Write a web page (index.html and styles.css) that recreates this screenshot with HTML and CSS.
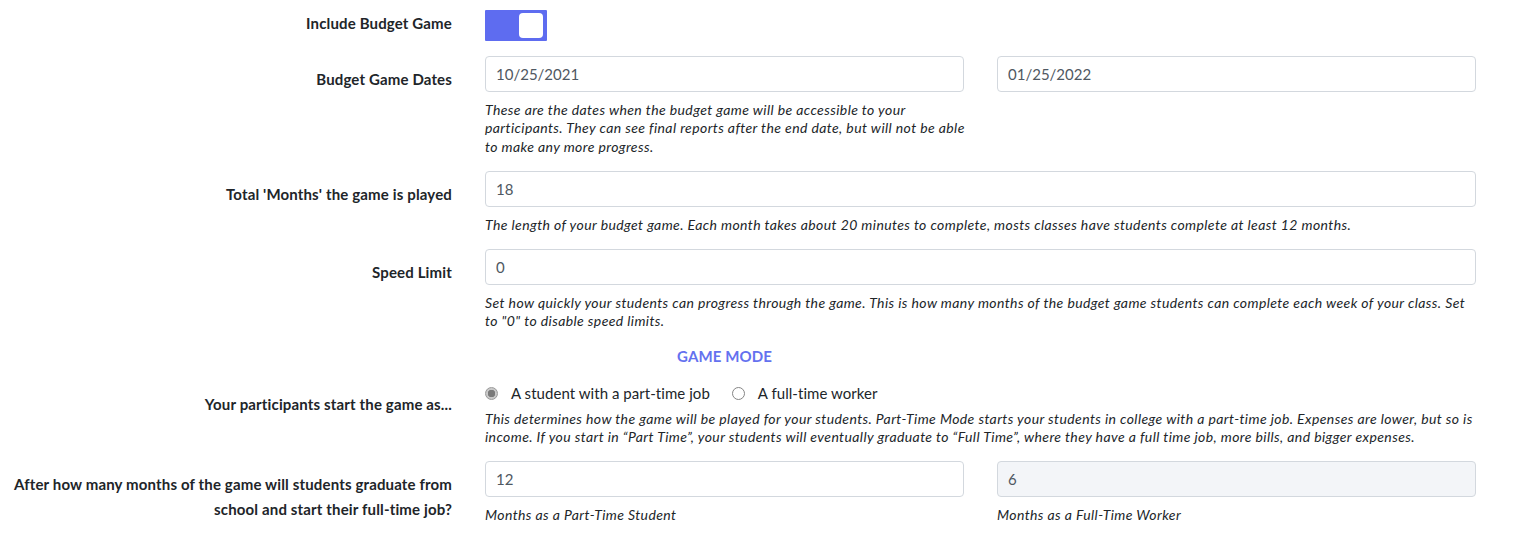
FILE: index.html
```html
<!DOCTYPE html>
<html lang="en">
<head>
    <meta charset="UTF-8">
    <meta name="viewport" content="width=device-width, initial-scale=1.0">
    <title>Budget Game Settings</title>
    <link rel="stylesheet" href="styles.css">
</head>
<body>
    <form class="settings">

        <div class="form-row">
            <label class="row-label">Include Budget Game</label>
            <div class="control">
                <div class="toggle on"><span class="knob"></span></div>
            </div>
        </div>

        <div class="form-row">
            <label class="row-label">Budget Game Dates</label>
            <div class="control split">
                <div>
                    <input type="text" class="field" value="10/25/2021">
                    <p class="help">These are the dates when the budget game will be accessible to your participants. They can see final reports after the end date, but will not be able to make any more progress.</p>
                </div>
                <div>
                    <input type="text" class="field" value="01/25/2022">
                </div>
            </div>
        </div>

        <div class="form-row">
            <label class="row-label">Total 'Months' the game is played</label>
            <div class="control">
                <input type="text" class="field" value="18">
                <p class="help">The length of your budget game. Each month takes about 20 minutes to complete, mosts classes have students complete at least 12 months.</p>
            </div>
        </div>

        <div class="form-row">
            <label class="row-label">Speed Limit</label>
            <div class="control">
                <input type="text" class="field" value="0">
                <p class="help">Set how quickly your students can progress through the game. This is how many months of the budget game students can complete each week of your class. Set to "0" to disable speed limits.</p>
            </div>
        </div>

        <div class="form-row">
            <div></div>
            <div class="control split">
                <h3 class="section-title">GAME MODE</h3>
            </div>
        </div>

        <div class="form-row">
            <label class="row-label">Your participants start the game as...</label>
            <div class="control">
                <div class="radios">
                    <label class="radio"><span class="dot checked"></span>A student with a part-time job</label>
                    <label class="radio"><span class="dot"></span>A full-time worker</label>
                </div>
                <p class="help tight">This determines how the game will be played for your students. Part-Time Mode starts your students in college with a part-time job. Expenses are lower, but so is income. If you start in “Part Time”, your students will eventually graduate to “Full Time”, where they have a full time job, more bills, and bigger expenses.</p>
            </div>
        </div>

        <div class="form-row">
            <label class="row-label">After how many months of the game will students graduate from school and start their full-time job?</label>
            <div class="control split">
                <div>
                    <input type="text" class="field" value="12">
                    <p class="help">Months as a Part-Time Student</p>
                </div>
                <div>
                    <input type="text" class="field" value="6" disabled>
                    <p class="help">Months as a Full-Time Worker</p>
                </div>
            </div>
        </div>

    </form>
</body>
</html>
```

FILE: styles.css
```css
body {
    margin: 0;
    font-family: Lato, "Open Sans", sans-serif;
    color: #212529;
    background: #fff;
}

.form-row {
    display: grid;
    grid-template-columns: 452px 991px;
    column-gap: 33px;
    margin-bottom: 15px;
}

.row-label {
    box-sizing: border-box;
    padding: 11px 0 0 12px;
    text-align: right;
    font-size: 15px;
    font-weight: 700;
    letter-spacing: 0.15px;
    line-height: 25px;
}

.split {
    display: grid;
    grid-template-columns: 1fr 1fr;
    column-gap: 33px;
}

.field {
    display: block;
    box-sizing: border-box;
    width: 100%;
    height: 36px;
    padding: 0 10px;
    border: 1px solid #d3d8de;
    border-radius: 4px;
    font-family: inherit;
    font-size: 15px;
    color: #4f5862;
    background: #fff;
}

.field:disabled {
    background: #f3f5f8;
    color: #4f5862;
}

.help {
    margin: 9px 0 0;
    font-size: 14px;
    font-style: italic;
    letter-spacing: 0.4px;
    line-height: 18.3px;
}

.split .help {
    margin-right: -8px;
}

.help.tight {
    margin-top: 4px;
}

.toggle {
    box-sizing: border-box;
    width: 62px;
    height: 31px;
    margin-top: 10px;
    padding: 3px 4px;
    display: flex;
    justify-content: flex-end;
    background: #5e6cf0;
    border-radius: 1px;
}

.knob {
    width: 24px;
    height: 25px;
    background: #fff;
    border-radius: 4px;
}

.section-title {
    margin: 0;
    text-align: center;
    font-size: 15px;
    font-weight: 700;
    letter-spacing: 0.1px;
    line-height: 20px;
    color: #6471ef;
}

.radios {
    display: flex;
    gap: 22px;
    height: 25px;
    align-items: center;
}

.radio {
    display: flex;
    align-items: center;
    gap: 13px;
    font-size: 15px;
    letter-spacing: 0.05px;
    line-height: 25px;
}

.dot {
    box-sizing: border-box;
    width: 13px;
    height: 13px;
    border: 1px solid #858585;
    border-radius: 50%;
    background: #fff;
}

.dot.checked {
    border-color: #9a9a9a;
    background: radial-gradient(circle, #7a7a7a 0 3.5px, #c9c9c9 4px);
}
```
